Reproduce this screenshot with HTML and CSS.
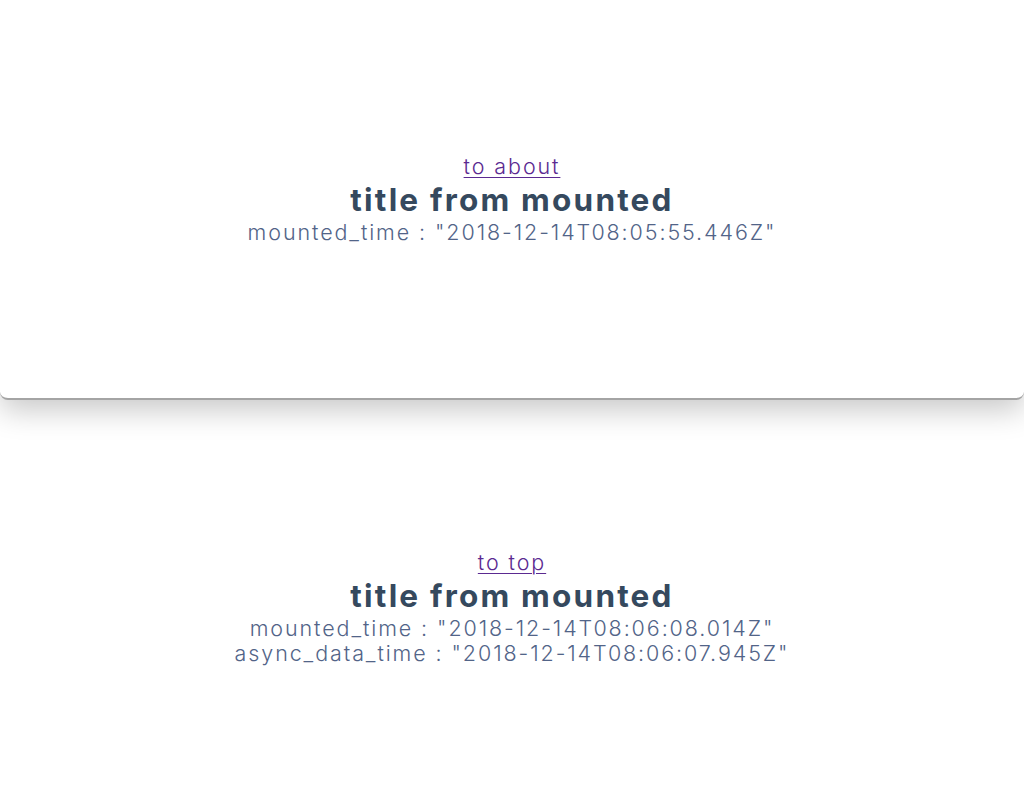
FILE: index.html
```html
<!DOCTYPE html>
<html>
<head>
<meta charset="utf-8">
<link rel="stylesheet" href="styles.css">
</head>
<body>
<div class="stage">
  <section class="page page-top">
    <div class="content">
      <a class="nav" href="#">to about</a>
      <h1 class="title">title from mounted</h1>
      <div class="line">mounted_time : "2018-12-14T08:05:55.446Z"</div>
    </div>
  </section>
  <section class="page page-bottom">
    <div class="content">
      <a class="nav" href="#">to top</a>
      <h1 class="title">title from mounted</h1>
      <div class="line">mounted_time : "2018-12-14T08:06:08.014Z"</div>
      <div class="line">async_data_time : "2018-12-14T08:06:07.945Z"</div>
    </div>
  </section>
</div>
</body>
</html>
```
FILE: styles.css
```css
html, body {
  margin: 0;
  padding: 0;
  background: #ffffff;
  overflow: hidden;
}
body {
  font-family: Inter, "Noto Sans", sans-serif;
  color: #526488;
}
.stage {
  height: 789px;
  overflow: hidden;
}
.page {
  display: flex;
  align-items: center;
  justify-content: center;
}
.page-top {
  position: relative;
  z-index: 2;
  height: 398px;
  background: #ffffff;
  border-bottom: 2px solid #a4a4a4;
  border-radius: 0 0 8px 8px;
  box-shadow: 0 10px 30px rgba(0, 0, 0, 0.22);
}
.page-bottom {
  height: 415px;
  background: #ffffff;
}
.content {
  display: flex;
  flex-direction: column;
  align-items: center;
  text-align: center;
}
.nav {
  font-size: 21.5px;
  line-height: 25px;
  font-weight: 350;
  color: #5b2a91;
  text-decoration: underline;
  text-underline-offset: 3px;
  text-decoration-thickness: 1px;
  letter-spacing: 1.9px;
}
.title {
  margin: 0;
  font-size: 31.5px;
  line-height: 41px;
  font-weight: 700;
  color: #35495e;
  letter-spacing: 2.2px;
}
.line {
  font-size: 21.5px;
  line-height: 25px;
  font-weight: 350;
  letter-spacing: 1.9px;
}
```
